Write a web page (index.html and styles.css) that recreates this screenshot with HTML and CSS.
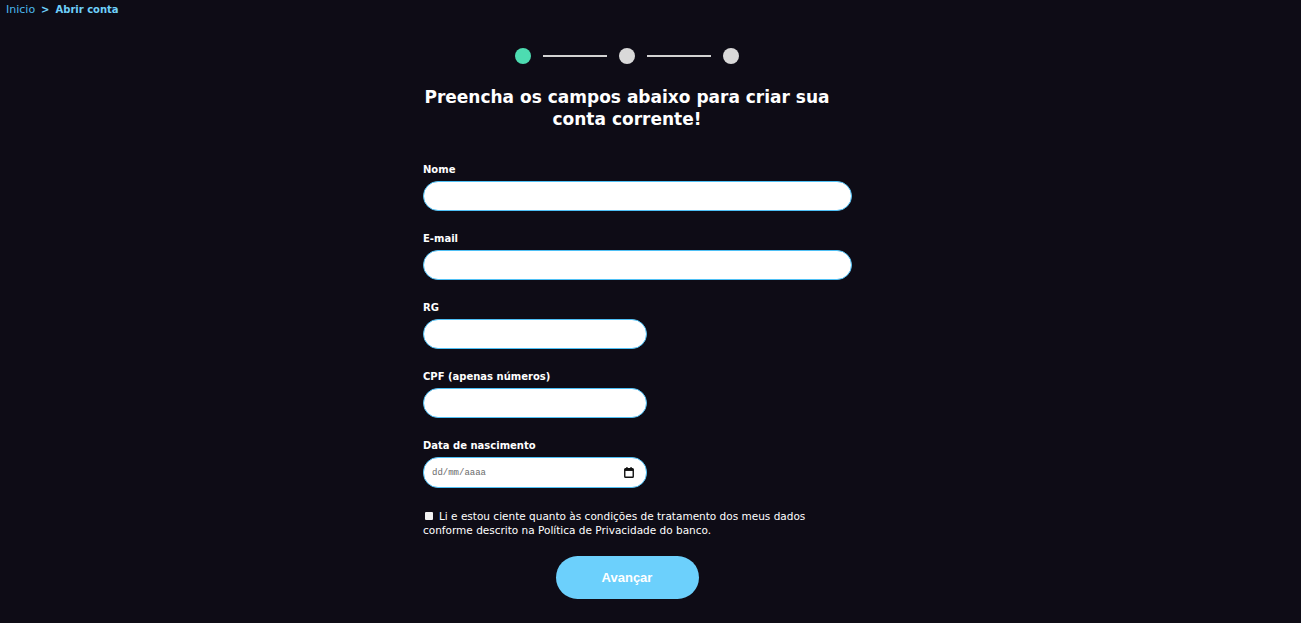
FILE: index.html
```html
<!DOCTYPE html>
<html lang="pt-BR">
<head>
<meta charset="utf-8">
<title>Abrir conta</title>
<link rel="stylesheet" href="styles.css">
</head>
<body>
<nav class="breadcrumb">
  <a class="crumb" href="#">Inicio</a>
  <span class="sep">&gt;</span>
  <span class="crumb current">Abrir conta</span>
</nav>
<main class="page">
  <div class="column">
    <div class="stepper">
      <span class="dot active"></span>
      <span class="line"></span>
      <span class="dot"></span>
      <span class="line"></span>
      <span class="dot"></span>
    </div>
    <h1 class="title">Preencha os campos abaixo para criar sua<br>conta corrente!</h1>
    <form class="form">
      <div class="field">
        <label class="label" for="nome">Nome</label>
        <input class="input wide" id="nome" type="text">
      </div>
      <div class="field">
        <label class="label" for="email">E-mail</label>
        <input class="input wide" id="email" type="email">
      </div>
      <div class="field">
        <label class="label" for="rg">RG</label>
        <input class="input narrow" id="rg" type="text">
      </div>
      <div class="field">
        <label class="label" for="cpf">CPF (apenas números)</label>
        <input class="input narrow" id="cpf" type="text">
      </div>
      <div class="field">
        <label class="label" for="nasc">Data de nascimento</label>
        <div class="date-wrap">
          <input class="input narrow date" id="nasc" type="text" placeholder="dd/mm/aaaa">
          <svg class="cal" width="10" height="11" viewBox="0 0 10 11" aria-hidden="true">
            <rect x="0.75" y="1.75" width="8.5" height="8.5" rx="0.8" fill="none" stroke="#111" stroke-width="1.4"/>
            <rect x="0.75" y="1.75" width="8.5" height="2.2" fill="#111"/>
            <rect x="2.3" y="0" width="1.3" height="2.4" fill="#111"/>
            <rect x="6.4" y="0" width="1.3" height="2.4" fill="#111"/>
          </svg>
        </div>
      </div>
      <label class="consent"><span class="box"></span>Li e estou ciente quanto às condições de tratamento dos meus dados conforme descrito na Política de Privacidade do banco.</label>
      <div class="actions">
        <button class="btn" type="button">Avançar</button>
      </div>
    </form>
  </div>
</main>
</body>
</html>
```
FILE: styles.css
```css
* { box-sizing: border-box; }
html, body { margin: 0; padding: 0; }
body {
  background: #0e0c16;
  color: #ffffff;
  font-family: "DejaVu Sans", "Noto Sans", sans-serif;
  height: 623px;
  overflow: hidden;
}
.breadcrumb {
  display: flex;
  align-items: center;
  gap: 6px;
  padding: 3px 0 0 6px;
  font-size: 11px;
  line-height: 14px;
}
.crumb { color: #4cb8ee; text-decoration: none; }
.sep { color: #6ed0fb; font-weight: bold; font-size: 10px; }
.current { color: #6ed0fb; font-weight: bold; font-size: 10px; }
.page {
  display: flex;
  justify-content: center;
  padding-right: 47px;
}
.column {
  width: 408px;
  display: flex;
  flex-direction: column;
}
.stepper {
  display: flex;
  align-items: center;
  justify-content: center;
  margin-top: 31px;
  gap: 10px;
}
.dot {
  width: 16px;
  height: 16px;
  border-radius: 50%;
  background: #d9d9d9;
}
.dot.active { background: #4ddcb1; }
.line {
  width: 64px;
  height: 2px;
  background: #d2d2d2;
  margin: 0 2px;
}
.title {
  margin: 22px -20px 0;
  text-align: center;
  font-size: 17px;
  line-height: 22px;
  font-weight: bold;
  color: #ffffff;
}
.form {
  display: flex;
  flex-direction: column;
  margin-top: 33px;
}
.field {
  display: flex;
  flex-direction: column;
  align-items: flex-start;
  margin-bottom: 21px;
}
.label {
  font-size: 10px;
  line-height: 14px;
  font-weight: bold;
  margin-bottom: 4px;
  color: #ffffff;
}
.input {
  height: 30px;
  border: 1px solid #4fc0f5;
  border-radius: 15px;
  background: #ffffff;
  outline: none;
  padding: 0 10px;
  font-family: "Liberation Mono", monospace;
  font-size: 10px;
  color: #222;
}
.wide { width: 429px; }
.narrow { width: 224px; }
.date-wrap { position: relative; }
.date { height: 31px; padding-left: 8px; font-size: 9px; }
.date::placeholder { color: #6a6a6a; }
.cal {
  position: absolute;
  right: 13px;
  top: 10px;
}
.consent {
  display: block;
  width: 400px;
  margin-top: 0;
  font-size: 10.5px;
  line-height: 14px;
  color: #ffffff;
}
.box {
  display: inline-block;
  width: 8px;
  height: 8px;
  margin: 0 6px 0 2px;
  background: #f2f2f2;
  border-radius: 1px;
}
.actions {
  display: flex;
  justify-content: center;
  margin-top: 19px;
}
.btn {
  width: 143px;
  height: 43px;
  border: none;
  border-radius: 22px;
  background: #6cd0fc;
  color: #ffffff;
  font-family: "Liberation Sans", Arial, sans-serif;
  font-weight: bold;
  font-size: 13px;
}
```
